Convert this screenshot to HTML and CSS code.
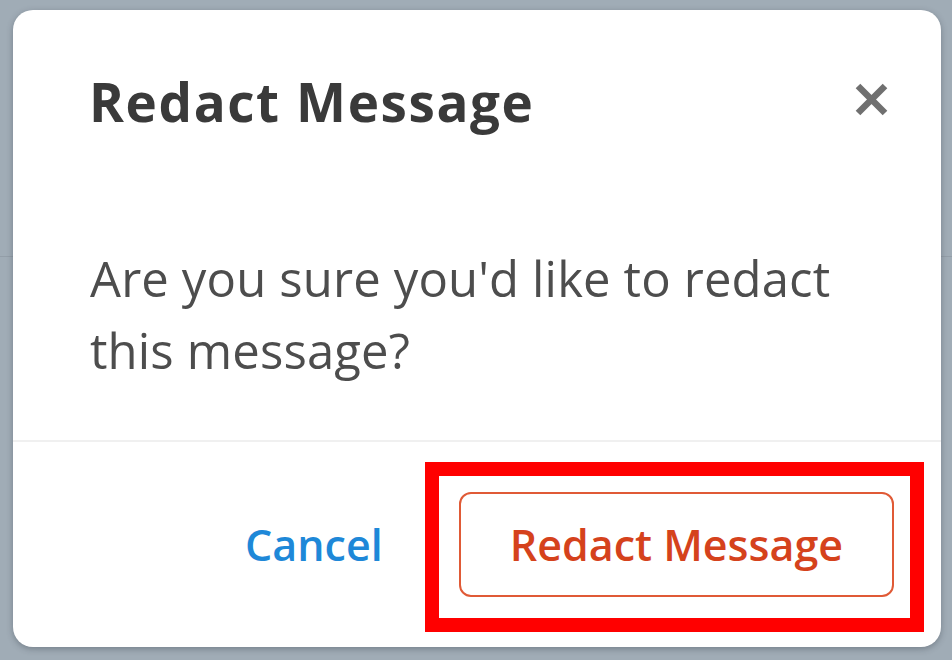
FILE: index.html
```html
<!DOCTYPE html>
<html lang="en">
<head>
<meta charset="utf-8">
<title>Redact Message</title>
<link rel="stylesheet" href="styles.css">
</head>
<body>
<div class="page">
  <div class="dialog" role="dialog" aria-labelledby="dlg-title">
    <div class="dialog-header">
      <h2 class="dialog-title" id="dlg-title">Redact Message</h2>
      <button class="close-btn" aria-label="Close">
        <svg width="33" height="33" viewBox="0 0 33 33" aria-hidden="true">
          <path d="M3 3 L30 30 M30 3 L3 30" stroke="#707070" stroke-width="6.5" fill="none"/>
        </svg>
      </button>
    </div>
    <div class="dialog-body">
      <p class="dialog-text">Are you sure you'd like to redact this message?</p>
    </div>
    <div class="dialog-footer">
      <button class="btn-link">Cancel</button>
      <div class="danger-wrap">
        <button class="btn-danger">Redact Message</button>
        <span class="highlight-box" aria-hidden="true"></span>
      </div>
    </div>
  </div>
</div>
</body>
</html>
```
FILE: styles.css
```css
html, body {
  margin: 0;
  padding: 0;
}
body {
  width: 952px;
  height: 660px;
  overflow: hidden;
  font-family: "Open Sans", "Noto Sans", sans-serif;
  background:
    linear-gradient(to bottom, transparent 256px, #939ea8 256px, #939ea8 257px, transparent 257px),
    #a0acb6;
}
.page {
  padding: 10px 11px 0 13px;
}
.dialog {
  background: #ffffff;
  border-radius: 20px;
  height: 637px;
  display: flex;
  flex-direction: column;
  box-shadow: 0 2px 6px rgba(40, 50, 60, 0.35);
}
.dialog-header {
  display: flex;
  justify-content: space-between;
  align-items: flex-start;
  padding: 56px 53px 0 76px;
}
.dialog-title {
  margin: 0;
  font-size: 53px;
  line-height: 72px;
  font-weight: 700;
  letter-spacing: 1.6px;
  color: #3a3a3a;
}
.close-btn {
  margin-top: 17px;
  padding: 0;
  border: 0;
  background: none;
  width: 33px;
  height: 33px;
  display: block;
}
.close-btn svg {
  display: block;
}
.dialog-body {
  padding: 104px 80px 54px 77px;
  border-bottom: 2px solid #f0f0f0;
}
.dialog-text {
  margin: 0;
  font-size: 49px;
  line-height: 72px;
  letter-spacing: 0.15px;
  color: #4d4d4d;
}
.dialog-footer {
  flex: 1;
  display: flex;
  justify-content: flex-end;
  align-items: center;
  gap: 76px;
  padding: 0 47px 0 0;
}
.btn-link {
  border: 0;
  background: none;
  padding: 0;
  font-family: inherit;
  font-size: 43px;
  font-weight: 600;
  color: #1e88d8;
}
.danger-wrap {
  position: relative;
}
.btn-danger {
  display: block;
  height: 105px;
  padding: 0 49px;
  border: 2px solid #e05a36;
  border-radius: 12px;
  background: #ffffff;
  font-family: inherit;
  font-size: 43px;
  font-weight: 600;
  color: #d5421c;
}
.highlight-box {
  position: absolute;
  left: -34px;
  top: -30px;
  right: -30px;
  bottom: -35px;
  border: 14px solid #ff0000;
}
```
